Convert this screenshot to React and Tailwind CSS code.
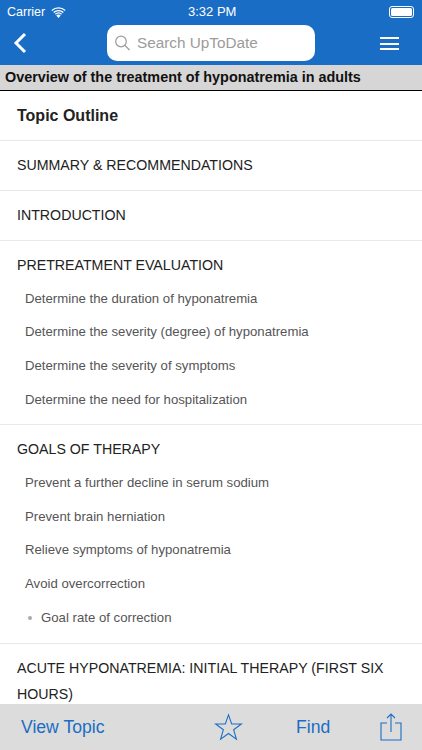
function Section({ title }) {
  return <div className="h-[50px] flex items-center pl-[17px] text-[14.2px] text-[#222] border-b border-[#e8e8e8]">{title}</div>
}

function Sub({ children }) {
  return <div className="h-[33.6px] flex items-center pl-[25px] text-[13.2px] text-[#555]">{children}</div>
}

function Group({ title, items, children }) {
  return (
    <div className="border-b border-[#e8e8e8] pb-[8px]">
      <div className="h-[49px] flex items-center pl-[17px] text-[14.2px] text-[#222]">{title}</div>
      <div className="-mt-[8px]">
        {items.map((item) => <Sub key={item}>{item}</Sub>)}
        {children}
      </div>
    </div>
  )
}

export default function App() {
  return (
    <div className="w-[422px] h-[750px] overflow-hidden flex flex-col bg-white font-['Liberation_Sans',Arial,sans-serif]">
      <div className="bg-[#1a6dc4] h-[65px] shrink-0 text-white">
        <div className="h-[23px] pt-[1px] flex items-center justify-between px-[7px] text-[12.5px] relative">
          <div className="flex items-center gap-[6px]">
            <span>Carrier</span>
            <svg width="15" height="11" viewBox="0 0 15 11" fill="white">
              <path d="M7.5 11 L5.3 8.4 A3.3 3.3 0 0 1 9.7 8.4 Z" />
              <path d="M3.9 6.8 A5.4 5.4 0 0 1 11.1 6.8 L10.2 7.8 A4 4 0 0 0 4.8 7.8 Z" />
              <path d="M2.2 4.9 A8 8 0 0 1 12.8 4.9 L11.9 5.9 A6.6 6.6 0 0 0 3.1 5.9 Z" />
              <path d="M0.4 3 A10.6 10.6 0 0 1 14.6 3 L13.7 4 A9.2 9.2 0 0 0 1.3 4 Z" />
            </svg>
          </div>
          <span className="absolute left-[188px] text-[13px]">3:32 PM</span>
          <div className="w-[25px] h-[12px] rounded-[3px] border border-white p-[1px] mr-[1px]">
            <div className="w-full h-full bg-white rounded-[1.5px]" />
          </div>
        </div>
        <div className="h-[42px] flex items-start">
          <svg className="ml-[13px] mt-[9px] shrink-0" width="14" height="22" viewBox="0 0 14 22" fill="none" stroke="white" strokeWidth="3">
            <path d="M12 2 L3 11 L12 20" />
          </svg>
          <div className="ml-[80px] w-[208px] h-[36px] mt-[2px] bg-white rounded-[10px] flex items-center pl-[8px] gap-[7px] text-[#9b9b9b] text-[15.3px]">
            <svg width="15" height="16" viewBox="0 0 15 16" fill="none" stroke="#9b9b9b" strokeWidth="1.2">
              <circle cx="6" cy="6.5" r="5.3" />
              <path d="M10 10.5 L14.5 15" />
            </svg>
            <span>Search UpToDate</span>
          </div>
          <div className="ml-[65px] mt-[14px] w-[19px] flex flex-col gap-[3.5px]">
            <div className="h-[2px] bg-white" />
            <div className="h-[2px] bg-white" />
            <div className="h-[2px] bg-white" />
          </div>
        </div>
      </div>

      <div className="h-[26px] shrink-0 bg-[#d6d6d6] border-b border-black flex items-center pl-[5px] text-[14.4px] font-bold text-[#111] whitespace-nowrap">
        Overview of the treatment of hyponatremia in adults
      </div>

      <div className="flex-1 overflow-hidden">
        <div className="h-[50px] flex items-center pl-[17px] text-[16px] font-bold text-[#222] border-b border-[#e8e8e8]">Topic Outline</div>
        <Section title="SUMMARY & RECOMMENDATIONS" />
        <Section title="INTRODUCTION" />
        <Group
          title="PRETREATMENT EVALUATION"
          items={[
            'Determine the duration of hyponatremia',
            'Determine the severity (degree) of hyponatremia',
            'Determine the severity of symptoms',
            'Determine the need for hospitalization',
          ]}
        />
        <Group
          title="GOALS OF THERAPY"
          items={[
            'Prevent a further decline in serum sodium',
            'Prevent brain herniation',
            'Relieve symptoms of hyponatremia',
            'Avoid overcorrection',
          ]}
        >
          <div className="h-[34px] flex items-center pl-[28px] text-[13.2px] text-[#555]">
            <span className="w-[4px] h-[4px] rounded-full bg-[#aaa] mr-[9px]" />
            Goal rate of correction
          </div>
        </Group>
        <div className="pl-[17px] pr-[10px] pt-[11px] text-[14.2px] leading-[26px] text-[#222]">
          ACUTE HYPONATREMIA: INITIAL THERAPY (FIRST SIX HOURS)
        </div>
      </div>

      <div className="h-[46px] shrink-0 bg-[#dcdcdc] flex items-center text-[#1a6dc4] text-[17.6px] whitespace-nowrap">
        <span className="ml-[21px] w-[83px] shrink-0">View Topic</span>
        <svg className="ml-[110px] shrink-0" width="29" height="28" viewBox="0 0 30 28" fill="none" stroke="#1a6dc4" strokeWidth="1.1">
          <path d="M15 1.5 L18.3 10.8 L28.3 10.8 L20.3 16.8 L23.2 26.5 L15 20.7 L6.8 26.5 L9.7 16.8 L1.7 10.8 L11.7 10.8 Z" />
        </svg>
        <span className="ml-[53px] w-[34px] shrink-0">Find</span>
        <svg className="ml-[50px] shrink-0" width="22" height="28" viewBox="0 0 22 28" fill="none" stroke="#1a6dc4" strokeWidth="1.1">
          <path d="M7 10 H1 V27 H21 V10 H15" />
          <path d="M11 19 V1 M7 5 L11 1 L15 5" />
        </svg>
      </div>
    </div>
  )
}
